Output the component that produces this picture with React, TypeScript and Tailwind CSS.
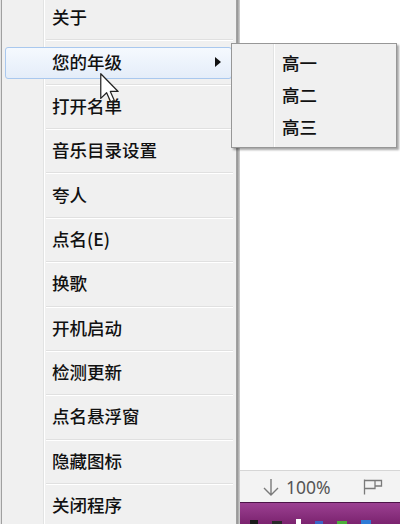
import React from "react";

const items = [
  "关于",
  "您的年级",
  "打开名单",
  "音乐目录设置",
  "夸人",
  "点名(E)",
  "换歌",
  "开机启动",
  "检测更新",
  "点名悬浮窗",
  "隐藏图标",
  "关闭程序",
];

function Row({ label, active }: { label: string; active?: boolean }) {
  return (
    <div className="h-[44.36px] shrink-0 flex flex-col">
      {active ? (
        <div className="flex-1 flex items-center pl-[3px] pr-[4px]">
          <div className="w-full h-[32px] rounded-[3px] border border-[#a9c8ee] bg-gradient-to-b from-[#f5f9fe] to-[#e4edf9] flex items-center pl-[46px] pr-[10px] pb-[2px]">
            <span className="text-[17.5px] leading-[20px] font-medium text-[#111]">{label}</span>
            <svg className="ml-auto" width="6" height="10" viewBox="0 0 6 10">
              <path d="M0 0 L6 5 L0 10 Z" fill="#111" />
            </svg>
          </div>
        </div>
      ) : (
        <div className="flex-1 flex items-center pl-[50px] pb-[2px]">
          <span className="text-[17.5px] leading-[20px] font-medium text-[#111]">{label}</span>
        </div>
      )}
      <div className="ml-[44px] mr-[3px] h-[1px] bg-[#e0e0e0]" />
      <div className="ml-[44px] mr-[3px] h-[1px] bg-white" />
    </div>
  );
}

export default function App() {
  return (
    <div className="relative w-[400px] h-[524px] overflow-hidden bg-white flex font-['Noto_Sans_CJK_SC','Microsoft_YaHei',sans-serif]">
      <div className="w-[1px] h-full bg-[#e2e2e2]" />
      <div className="w-[236px] h-full border-l border-r border-[#a0a0a0] bg-[linear-gradient(to_right,#f0f0f0_41px,#e2e3e3_41px,#e2e3e3_42px,#ffffff_42px,#ffffff_43px,#f0f0f0_43px)] flex flex-col">
        <div className="-mt-[3px] flex flex-col">
          {items.map((it, i) => (
            <Row key={it} label={it} active={i === 1} />
          ))}
        </div>
      </div>
      <div className="w-[3px] h-full bg-gradient-to-r from-[#8f8f8f] to-[#d4d4d4]" />
      <div className="flex-1 flex flex-col">
        <div className="flex-1 bg-white" />
        <div className="h-[32px] border-t border-[#d6d6d6] bg-[#f3f3f3] flex items-center pl-[22px]">
          <svg width="18" height="18" viewBox="0 0 18 18" fill="none" stroke="#7a7a7a" strokeWidth="1.4">
            <path d="M9 1 V17 M2 10 L9 17 L16 10" />
          </svg>
          <span className="ml-[6px] text-[17.5px] leading-[20px] text-[#555] font-['Noto_Sans',sans-serif]">100%</span>
          <svg className="ml-[32px]" width="20" height="16" viewBox="0 0 20 16" fill="none" stroke="#7a7a7a" strokeWidth="1.3">
            <path d="M1.5 0.5 V15.5 M1.5 1.5 H12 V9.5 H1.5 M12 1.5 H18.5 V7 H12" />
          </svg>
        </div>
        <div className="h-[22px] border-t border-[#4c1247] bg-gradient-to-b from-[#9c4092] to-[#7b236f] flex items-end gap-[14px] pl-[10px]">
          <div className="w-[8px] h-[4px] bg-[#1a1a1a]" />
          <div className="w-[10px] h-[3px] bg-[#2a2a2a]" />
          <div className="w-[5px] h-[5px] bg-white" />
          <div className="w-[8px] h-[3px] bg-[#3a66c8]" />
          <div className="w-[10px] h-[3px] bg-[#4caf3a]" />
          <div className="w-[10px] h-[4px] bg-[#2e7bd6]" />
        </div>
      </div>

      <div className="absolute left-[231px] top-[43px] w-[166px] h-[105px] border border-[#979797] bg-[linear-gradient(to_right,#f0f0f0_41px,#e2e3e3_41px,#e2e3e3_42px,#ffffff_42px,#ffffff_43px,#f0f0f0_43px)] shadow-[2px_2px_2px_rgba(0,0,0,0.35)] pt-[4px] flex flex-col">
        {["高一", "高二", "高三"].map((t) => (
          <div key={t} className="h-[32px] flex items-center pl-[50px] pb-[2px]">
            <span className="text-[17.5px] leading-[20px] font-medium text-[#111]">{t}</span>
          </div>
        ))}
      </div>

      <svg className="absolute left-[100px] top-[73px]" width="20" height="30" viewBox="0 0 13 19.5">
        <path
          d="M0.5 0.5 L0.5 16.5 L4.3 12.8 L7 18.8 L9.3 17.8 L6.7 12 L11.8 12 Z"
          fill="#fff"
          stroke="#222"
          strokeWidth="0.8"
          strokeLinejoin="round"
        />
      </svg>
    </div>
  );
}
